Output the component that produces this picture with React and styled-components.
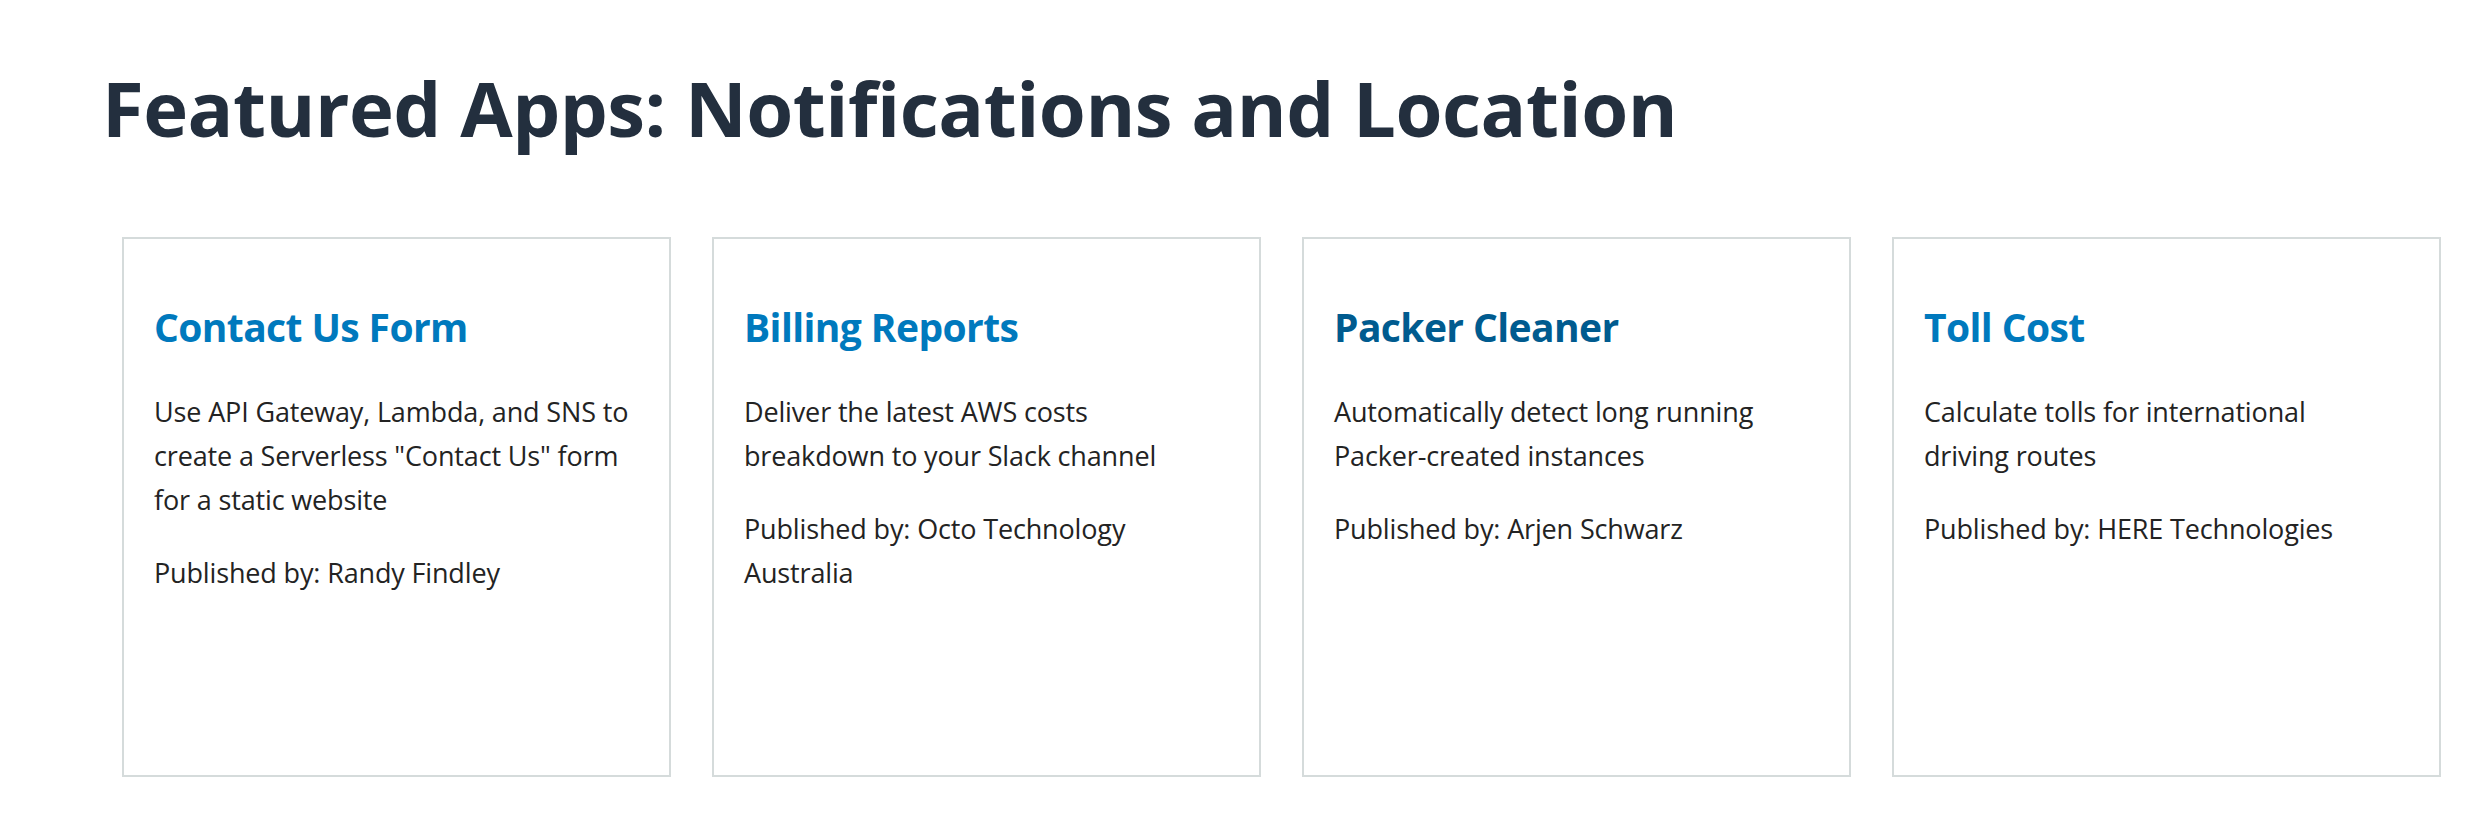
import React from "react";
import styled, { createGlobalStyle } from "styled-components";

const GlobalStyle = createGlobalStyle`
  body {
    margin: 0;
    background: #ffffff;
    font-family: "Open Sans", "Liberation Sans", sans-serif;
  }
`;

const Page = styled.div`
  padding: 62px 0 0 102px;
`;

const Heading = styled.h1`
  margin: 0 0 84px;
  font-size: 76px;
  line-height: 1.2;
  font-weight: 700;
  color: #232f3e;
  letter-spacing: -0.5px;
`;

const CardRow = styled.div`
  display: flex;
  gap: 41px;
  padding-left: 20px;
`;

const Card = styled.div`
  box-sizing: border-box;
  width: 549px;
  height: 540px;
  border: 2px solid #d5dbdb;
  padding: 65px 30px 0;
`;

const CardTitle = styled.a`
  display: block;
  font-size: 39px;
  line-height: 1.2;
  font-weight: 700;
  color: ${props => (props.$visited ? "#005b8f" : "#0079bd")};
  text-decoration: none;
  margin-bottom: 39px;
  letter-spacing: -0.6px;
`;

const Text = styled.p`
  margin: 0 0 29px;
  font-size: 27px;
  line-height: 44px;
  color: #232323;
  letter-spacing: -0.15px;
`;

// non-breaking spaces keep the line breaks of the original copy
const apps = [
  {
    title: "Contact Us Form",
    desc: 'Use API Gateway, Lambda, and SNS to create a Serverless "Contact Us" form for a static website',
    author: "Randy Findley",
  },
  {
    title: "Billing Reports",
    desc: "Deliver the latest AWS costs breakdown to your Slack channel",
    author: "Octo Technology Australia",
  },
  {
    title: "Packer Cleaner",
    desc: "Automatically detect long running Packer-created instances",
    author: "Arjen Schwarz",
    visited: true,
  },
  {
    title: "Toll Cost",
    desc: "Calculate tolls for international driving\u00a0routes",
    author: "HERE Technologies",
  },
];

export default function App() {
  return (
    <>
      <GlobalStyle />
      <Page>
        <Heading>Featured Apps: Notifications and Location</Heading>
        <CardRow>
          {apps.map(app => (
            <Card key={app.title}>
              <CardTitle href="#" $visited={app.visited}>
                {app.title}
              </CardTitle>
              <Text>{app.desc}</Text>
              <Text>Published by: {app.author}</Text>
            </Card>
          ))}
        </CardRow>
      </Page>
    </>
  );
}
